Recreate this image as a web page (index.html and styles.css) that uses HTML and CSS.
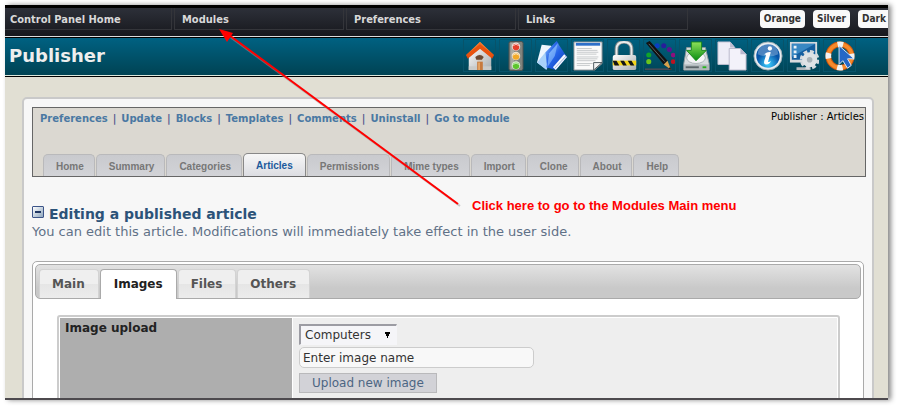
FILE: index.html
```html
<!DOCTYPE html>
<html lang="en">
<head>
<meta charset="utf-8">
<title>Publisher : Articles</title>
<link rel="stylesheet" href="styles.css">
</head>
<body>
<div class="window">
  <header class="menubar">
    <nav class="menu">
      <a href="#">Control Panel Home</a>
      <a href="#">Modules</a>
      <a href="#">Preferences</a>
      <a href="#">Links</a>
    </nav>
    <div class="themes">
      <button type="button">Orange</button>
      <button type="button">Silver</button>
      <button type="button">Dark</button>
    </div>
  </header>

  <div class="titlebar">
    <h1>Publisher</h1>
    <nav class="tools">
      <a href="#" aria-label="Home"><svg viewBox="0 0 32 32">
        <defs>
          <linearGradient id="roof" x2="0" y2="1"><stop stop-color="#ffa04a"/><stop offset="1" stop-color="#d93c05"/></linearGradient>
          <linearGradient id="metal" x2="1" y2="1"><stop stop-color="#fff"/><stop offset="1" stop-color="#a9aeb0"/></linearGradient>
          <linearGradient id="sky" x2="1" y2="1"><stop stop-color="#9fd0ff"/><stop offset=".45" stop-color="#2563e8"/><stop offset="1" stop-color="#063aa8"/></linearGradient>
          <radialGradient id="glow" cy=".85"><stop stop-color="#3fd0ff"/><stop offset="1" stop-color="#0755a8"/></radialGradient>
          <linearGradient id="green" x2="0" y2="1"><stop stop-color="#8fe05a"/><stop offset="1" stop-color="#078c12"/></linearGradient>
        </defs>
        <path d="M4 14 16 5l12 9v17H4z" fill="url(#metal)"/>
        <path d="M4 27h24v4H4z" fill="#c9cbca"/>
        <path d="M16 1 1 15l2 4L16 7l13 12 2-4z" fill="url(#roof)"/>
        <path d="M16 1 3 14 16 7l13 7z" fill="#f47028"/>
        <path d="M3 16 16 6l13 10" fill="none" stroke="#e9530f" stroke-width="4"/>
        <circle cx="16" cy="18" r="3.500" fill="#d7c8b8"/><path d="M11 17q5-4 9 0l-2 3h-6z" fill="#6d4a33"/>
        <path d="M13 22h6v9h-6z" fill="#c77a3d"/><path d="M14 23h2v8h-2z" fill="#e5a565"/>
      </svg></a>
      <a href="#" aria-label="Status"><svg viewBox="0 0 32 32">
        <rect x="8.500" y=".5" width="15" height="31" rx="2" fill="#81837d" stroke="#4c514f"/>
        <path d="M10 2h4v28h-4z" fill="#aaa9a2"/>
        <circle cx="16" cy="6" r="4.500" fill="#efe2dd"/><circle cx="16" cy="6.500" r="3.500" fill="#e5402c"/>
        <circle cx="16" cy="16" r="4.500" fill="#efe2cd"/><circle cx="16" cy="16.500" r="3.500" fill="#f1a929"/>
        <circle cx="16" cy="26" r="4.500" fill="#e0f2d8"/><circle cx="16" cy="26.500" r="3.500" fill="#5cc52c"/>
        <path d="M13 5q3-3 6 0M13 15q3-3 6 0M13 25q3-3 6 0" stroke="#fff" stroke-opacity=".7" fill="none"/>
      </svg></a>
      <a href="#" aria-label="Blocks"><svg viewBox="0 0 32 32">
        <path d="M0 23 5 4l10 1 4 10-9 15z" fill="#eef6fe"/><path d="M0 23 9 12l7 5-6 14z" fill="#a9d2fa"/>
        <path d="M9 12 21 0l2 3-4 22-8 4z" fill="url(#sky)"/>
        <path d="M22 2 32 17 20 31 10 28l3-15z" fill="url(#sky)"/>
        <path d="M13 13 22 3l-3 13-8 12z" fill="#8fc3ff" opacity=".6"/>
        <path d="M17 28 29 14l3 3-12 14z" fill="#f5f8ff"/><path d="M19 29 31 16" stroke="#9bafd4" fill="none"/>
      </svg></a>
      <a href="#" aria-label="Page"><svg viewBox="0 0 32 32">
        <path d="M1 1h30v23l-8 7H1z" fill="#fafafa" stroke="#858d92"/>
        <path d="M3 2h26v3H3z" fill="#2d6fc9"/>
        <path d="M4 8h16M4 10h22M4 12h23M4 14h21M4 17h23M4 19h22M4 21h20M4 24h17M4 26h14" stroke="#c4c7ca"/>
        <path d="M22 31v-8h9z" fill="#f1f2f2" stroke="#4b565c"/>
      </svg></a>
      <a href="#" aria-label="Permissions"><svg viewBox="0 0 32 32">
        <path d="M8 17V9q0-8 8-8t8 8v8" fill="none" stroke="#7b8588" stroke-width="4"/>
        <path d="M8 17V9q0-8 8-8t8 8v8" fill="none" stroke="#e9ecec" stroke-width="2"/>
        <rect x="4" y="15" width="25" height="16" rx="2" fill="url(#metal)"/>
        <path d="M4 21h25v5H4z" fill="#f3d51a"/>
        <path d="M4 21h4l3 5H6zM12 21h4l3 5h-4zM20 21h4l3 5h-4z" fill="#151515"/>
      </svg></a>
      <a href="#" aria-label="Colours"><svg viewBox="0 0 32 32">
        <circle cx="4" cy="22" r="2.700" fill="#6bc41c"/><circle cx="4" cy="15" r="2.700" fill="#10a52a"/><circle cx="7" cy="9" r="2.200" fill="#087a60"/><circle cx="13" cy="5" r="2.700" fill="#0b3fc0"/><circle cx="20" cy="5" r="2.700" fill="#271d9b"/><circle cx="26" cy="9" r="2.700" fill="#57168f"/><circle cx="30" cy="15" r="2.500" fill="#8e107e"/><circle cx="30" cy="22" r="2.500" fill="#bd1220"/>
        <path d="M0 30h28" stroke="#7d4d53"/>
        <path d="M1 2 5 0 24 21 20 25z" fill="#111"/><path d="M4 3 21 22" stroke="#666"/>
        <path d="M20 25 24 21 28 31z" fill="#d8a14d"/><path d="m25 29 2-1 1 3z" fill="#111"/>
      </svg></a>
      <a href="#" aria-label="Install"><svg viewBox="0 0 32 32">
        <path d="M6 7h20l4 17v7H3v-7z" fill="#d7dcdf" stroke="#8d979b"/>
        <ellipse cx="16" cy="18" rx="10" ry="6" fill="#f5f6f7" stroke="#a8b1b4"/>
        <path d="M3 25h27v6H3z" fill="#b0b8bb"/><path d="M5 27h14v2H5z" fill="#5c666a"/><path d="M23 27h4v2h-4z" fill="#28b31d"/>
        <path d="M11 1h11v9h5L16 21 6 10h5z" fill="url(#green)" stroke="#16861b"/>
      </svg></a>
      <a href="#" aria-label="Copy"><svg viewBox="0 0 32 32">
        <path d="M1 1h13l5 6v18H1z" fill="#eeedf7" stroke="#c0bfd1"/><path d="M14 1v6h5z" fill="#bdbbd0"/>
        <path d="M13 8h12l6 6v17H13z" fill="#f3f2fa" stroke="#b8b7ca"/><path d="M25 8v6h6z" fill="#bbb9cf"/>
      </svg></a>
      <a href="#" aria-label="About"><svg viewBox="0 0 32 32">
        <circle cx="16" cy="16" r="15" fill="#e9eef1" stroke="#9dabb2"/><circle cx="16" cy="16" r="12.500" fill="url(#glow)"/>
        <path d="M5 14a11 11 0 0 1 22 0q-10 5-22 0z" fill="#fff" opacity=".28"/>
        <circle cx="18" cy="8" r="2.300" fill="#fff"/><path d="M12 14q4-3 7-2l-3 10q1 1 3-1-1 4-5 4-3 0-2-4l2-6z" fill="#fff"/>
      </svg></a>
      <a href="#" aria-label="Settings"><svg viewBox="0 0 32 32">
        <path d="M1 1h29v22H1z" fill="#d6dadd"/><path d="M3 3h25v17H3z" fill="#155fa0"/><path d="M3 3h25L3 17z" fill="#3988c3"/>
        <path d="M5 5h3v3H5zM5 10h3v3H5zM5 15h3v3H5z" fill="#e9f1f8"/><path d="M8 28h15v3H8z" fill="#b2b8bc"/>
        <circle cx="22" cy="20" r="8.500" fill="none" stroke="#d6dade" stroke-width="4" stroke-dasharray="4 2.680"/>
        <circle cx="22" cy="20" r="8" fill="#dfe3e6"/><circle cx="22" cy="20" r="3" fill="#a9b3b8"/>
      </svg></a>
      <a href="#" aria-label="Help"><svg viewBox="0 0 32 32">
        <circle cx="16" cy="16" r="12.500" fill="none" stroke="#d5580b" stroke-width="6"/>
        <circle cx="16" cy="16" r="12.500" fill="none" stroke="#f68a2c" stroke-width="4"/>
        <circle cx="16" cy="16" r="12.500" fill="none" stroke="#f1f3f4" stroke-width="6" stroke-dasharray="6 13.630" stroke-dashoffset="3"/>
        <path d="M15 5v20l4-4 5 8 4-3-4-7h7z" fill="#2467c6" stroke="#e3edf9"/>
      </svg></a>
    </nav>
  </div>

  <main class="panel">
    <section class="modulebar">
      <div class="modulebar-top">
        <nav class="links"><a href="#">Preferences</a><span>|</span><a href="#">Update</a><span>|</span><a href="#">Blocks</a><span>|</span><a href="#">Templates</a><span>|</span><a href="#">Comments</a><span>|</span><a href="#">Uninstall</a><span>|</span><a href="#">Go to module</a></nav>
        <div class="crumb">Publisher : Articles</div>
      </div>
      <nav class="tabs">
        <a href="#">Home</a><a href="#">Summary</a><a href="#">Categories</a><a href="#" class="current">Articles</a><a href="#">Permissions</a><a href="#">Mime types</a><a href="#">Import</a><a href="#">Clone</a><a href="#">About</a><a href="#">Help</a>
      </nav>
    </section>

    <div class="heading">
      <button type="button" class="collapse" aria-label="Collapse"></button>
      <h2>Editing a published article</h2>
    </div>
    <p class="intro">You can edit this article. Modifications will immediately take effect in the user side.</p>

    <section class="editor">
      <nav class="editor-tabs">
        <a href="#">Main</a><a href="#" class="current">Images</a><a href="#">Files</a><a href="#">Others</a>
      </nav>
      <form class="upload">
        <div class="upload-label"><label for="source">Image upload</label></div>
        <div class="upload-fields">
          <select id="source"><option>Computers</option></select>
          <input type="text" aria-label="Image name" value="Enter image name">
          <button type="button">Upload new image</button>
        </div>
      </form>
    </section>
  </main>
</div>

<svg class="arrow" width="250" height="186" viewBox="0 0 250 186">
  <path d="M10 8 244 180" stroke="#999" stroke-opacity=".5" stroke-width="2"/>
  <path d="M9 6 242 178" stroke="#f00" stroke-width="2"/>
  <path d="M3 3 17 7 11 16z" fill="#f00"/>
</svg>
<div class="callout">Click here to go to the Modules Main menu</div>
</body>
</html>
```

FILE: styles.css
```css
* { box-sizing: border-box; }

body {
  margin: 0;
  height: 100vh;
  padding: 5px 9px 7px 5px;
  display: flex;
  background: #fff;
  font-family: "DejaVu Sans", sans-serif;
  font-size: 12px;
  overflow: hidden;
}

a { color: inherit; text-decoration: none; }
button, input, select { font: inherit; }
h1, h2, p { margin: 0; }

.window {
  flex: 1;
  min-width: 0;
  overflow: hidden;
  background: #e1dfd3;
  border-bottom: 2px solid #4d4a4e;
  box-shadow: 3px 0 5px #888;
}

.menubar {
  height: 31px;
  display: flex;
  justify-content: space-between;
  border-top: 3px solid #000;
  background: linear-gradient(#2d3039, #17181d);
  overflow: hidden;
}

.menu { display: flex; gap: 2px; }
.menu a {
  width: 170px;
  height: 22px;
  padding-left: 7px;
  border: solid #34353a;
  border-width: 0 1px 1px;
  color: #d8d8d8;
  font: bold 11px/24px "DejaVu Sans Condensed", "DejaVu Sans", sans-serif;
}
.menu a:first-child { width: 167px; padding-left: 5px; border-left: 0; }

.themes { display: flex; gap: 8px; padding-top: 2px; }
.themes button {
  height: 18px;
  padding: 0 4px;
  border: 0;
  border-radius: 4px;
  background: #f9f9f9;
  color: #333;
  font: bold 10px/18px "DejaVu Sans Condensed", "DejaVu Sans", sans-serif;
}
.themes button:last-child { padding-right: 2px; border-radius: 4px 0 0 4px; }

.titlebar {
  height: 41px;
  display: flex;
  justify-content: space-between;
  border-top: 1px solid #ddd;
  border-bottom: 1px solid #000;
  box-shadow: inset 0 1px #000, inset 0 -1px #dce8dc;
  background: linear-gradient(#006283, #004252);
}
.titlebar h1 { padding-left: 4px; color: #eee; font: bold 18px/38px "DejaVu Sans", sans-serif; }
.tools { display: flex; gap: 3px; padding: 2px 32px 0 0; }
.tools a { width: 33px; height: 33px; padding: 1px; border: 1px solid #07536a; }
.tools svg { display: block; width: 30px; height: 30px; }

.panel {
  margin: 20px 14px 0 17px;
  padding: 8px 6px 0 8px;
  height: 400px;
  border: 2px solid #c9c9c9;
  border-radius: 5px;
  background: #f7f7f7;
}

.modulebar {
  height: 70px;
  display: flex;
  flex-direction: column;
  justify-content: space-between;
  border: 1px solid #666;
  background: #dbd8d1;
}
.modulebar-top { display: flex; justify-content: space-between; }
.links { display: flex; gap: 5px; padding: 3px 0 0 7px; color: #555c90; font-weight: bold; font-size: 10px; line-height: 16px; }
.links a { color: #4a78a3; }
.crumb { padding: 1px 1px 0 0; color: #000; font-size: 10px; line-height: 16px; }

.tabs { display: flex; gap: 1px; padding-left: 10px; align-items: flex-end; }
.tabs a {
  height: 22px;
  padding: 0 10px 0 12px;
  border: 1px solid #b9b9bb;
  border-bottom: 0;
  border-radius: 5px 5px 0 0;
  background: linear-gradient(#c9cace, #d2d3d7);
  color: #777;
  font: bold 10px/23px "Liberation Sans", sans-serif;
}
.tabs .current { height: 23px; padding: 0 12px; border-color: #888; background: linear-gradient(#f7f7f7, #dcdde2); color: #1c5a9c; }

.heading { display: flex; align-items: center; gap: 5px; margin-top: 28px; color: #2c5379; }
.collapse { width: 12px; height: 12px; margin-bottom: 4px; padding: 0; border: 1px solid #3c5488; border-radius: 1px; background: linear-gradient(#203763, #203763) center / 6px 2px no-repeat, linear-gradient(135deg, #fff, #8ea6bd); }
.heading h2 { font-size: 14px; line-height: 18px; }
.intro { color: #5f7187; font-size: 13px; line-height: 17px; }

.editor { margin: 21px 2px 0 0; padding: 2px; height: 220px; border: 1px solid #aaa; border-radius: 5px; background: #fff; }
.editor-tabs {
  display: flex;
  gap: 1px;
  height: 35px;
  padding: 4px 3px 0;
  border: 1px solid #aaa;
  border-radius: 5px;
  background: linear-gradient(#e2e2e2, #c9c9c9 70%);
}
.editor-tabs a {
  height: 29px;
  padding: 0 13px 0 12px;
  border: 1px solid #d3d3d3;
  border-bottom: 0;
  border-radius: 4px 4px 0 0;
  background: linear-gradient(#efefef 50%, #e5e5e5 50%, #ececec);
  color: #555;
  font-weight: bold;
  font-size: 12px;
  line-height: 28px;
}
.editor-tabs .current { height: 30px; padding: 0 13px; border-color: #aaa; background: #fff; color: #212121; }

.upload {
  display: grid;
  grid-template-columns: 232px 1fr;
  gap: 1px;
  margin: 16px 21px 0 22px;
  padding: 1px;
  height: 180px;
  border: 2px solid #ccc;
  border-radius: 3px;
  background: #fff;
}
.upload-label { padding: 2px 5px; background: #aeaeae; color: #222; font-weight: bold; line-height: 17px; }
.upload-fields { display: flex; flex-direction: column; align-items: flex-start; padding: 6px; background: #eee; color: #333; }
.upload-fields select {
  appearance: none;
  width: 98px;
  height: 21px;
  padding: 0 0 0 4px;
  border: solid #f5f5f8;
  border-width: 2px 1px 1px 2px;
  border-top-color: #9c9ca3;
  border-left-color: #9c9ca3;
  border-radius: 0;
  background: conic-gradient(from -26deg at 50% 100%, #000 52deg, transparent 0) right 5px top 6px / 7px 6px no-repeat, #f5f5f8;
  color: #333;
}
.upload-fields input { width: 235px; height: 21px; margin: 2px 0 5px; padding: 0 3px; border: 1px solid #ccc; border-radius: 5px; background: #f8f8f8; color: #333; }
.upload-fields button { height: 20px; padding: 0 12px; border: 1px solid #b9b9bb; background: #d2d2d7; color: #4c6583; }

.arrow { position: absolute; left: 216px; top: 26px; fill: none; }
.callout { position: absolute; left: 472px; top: 197px; color: #f00; font: bold 13px/17px "Liberation Sans", sans-serif; }
```
